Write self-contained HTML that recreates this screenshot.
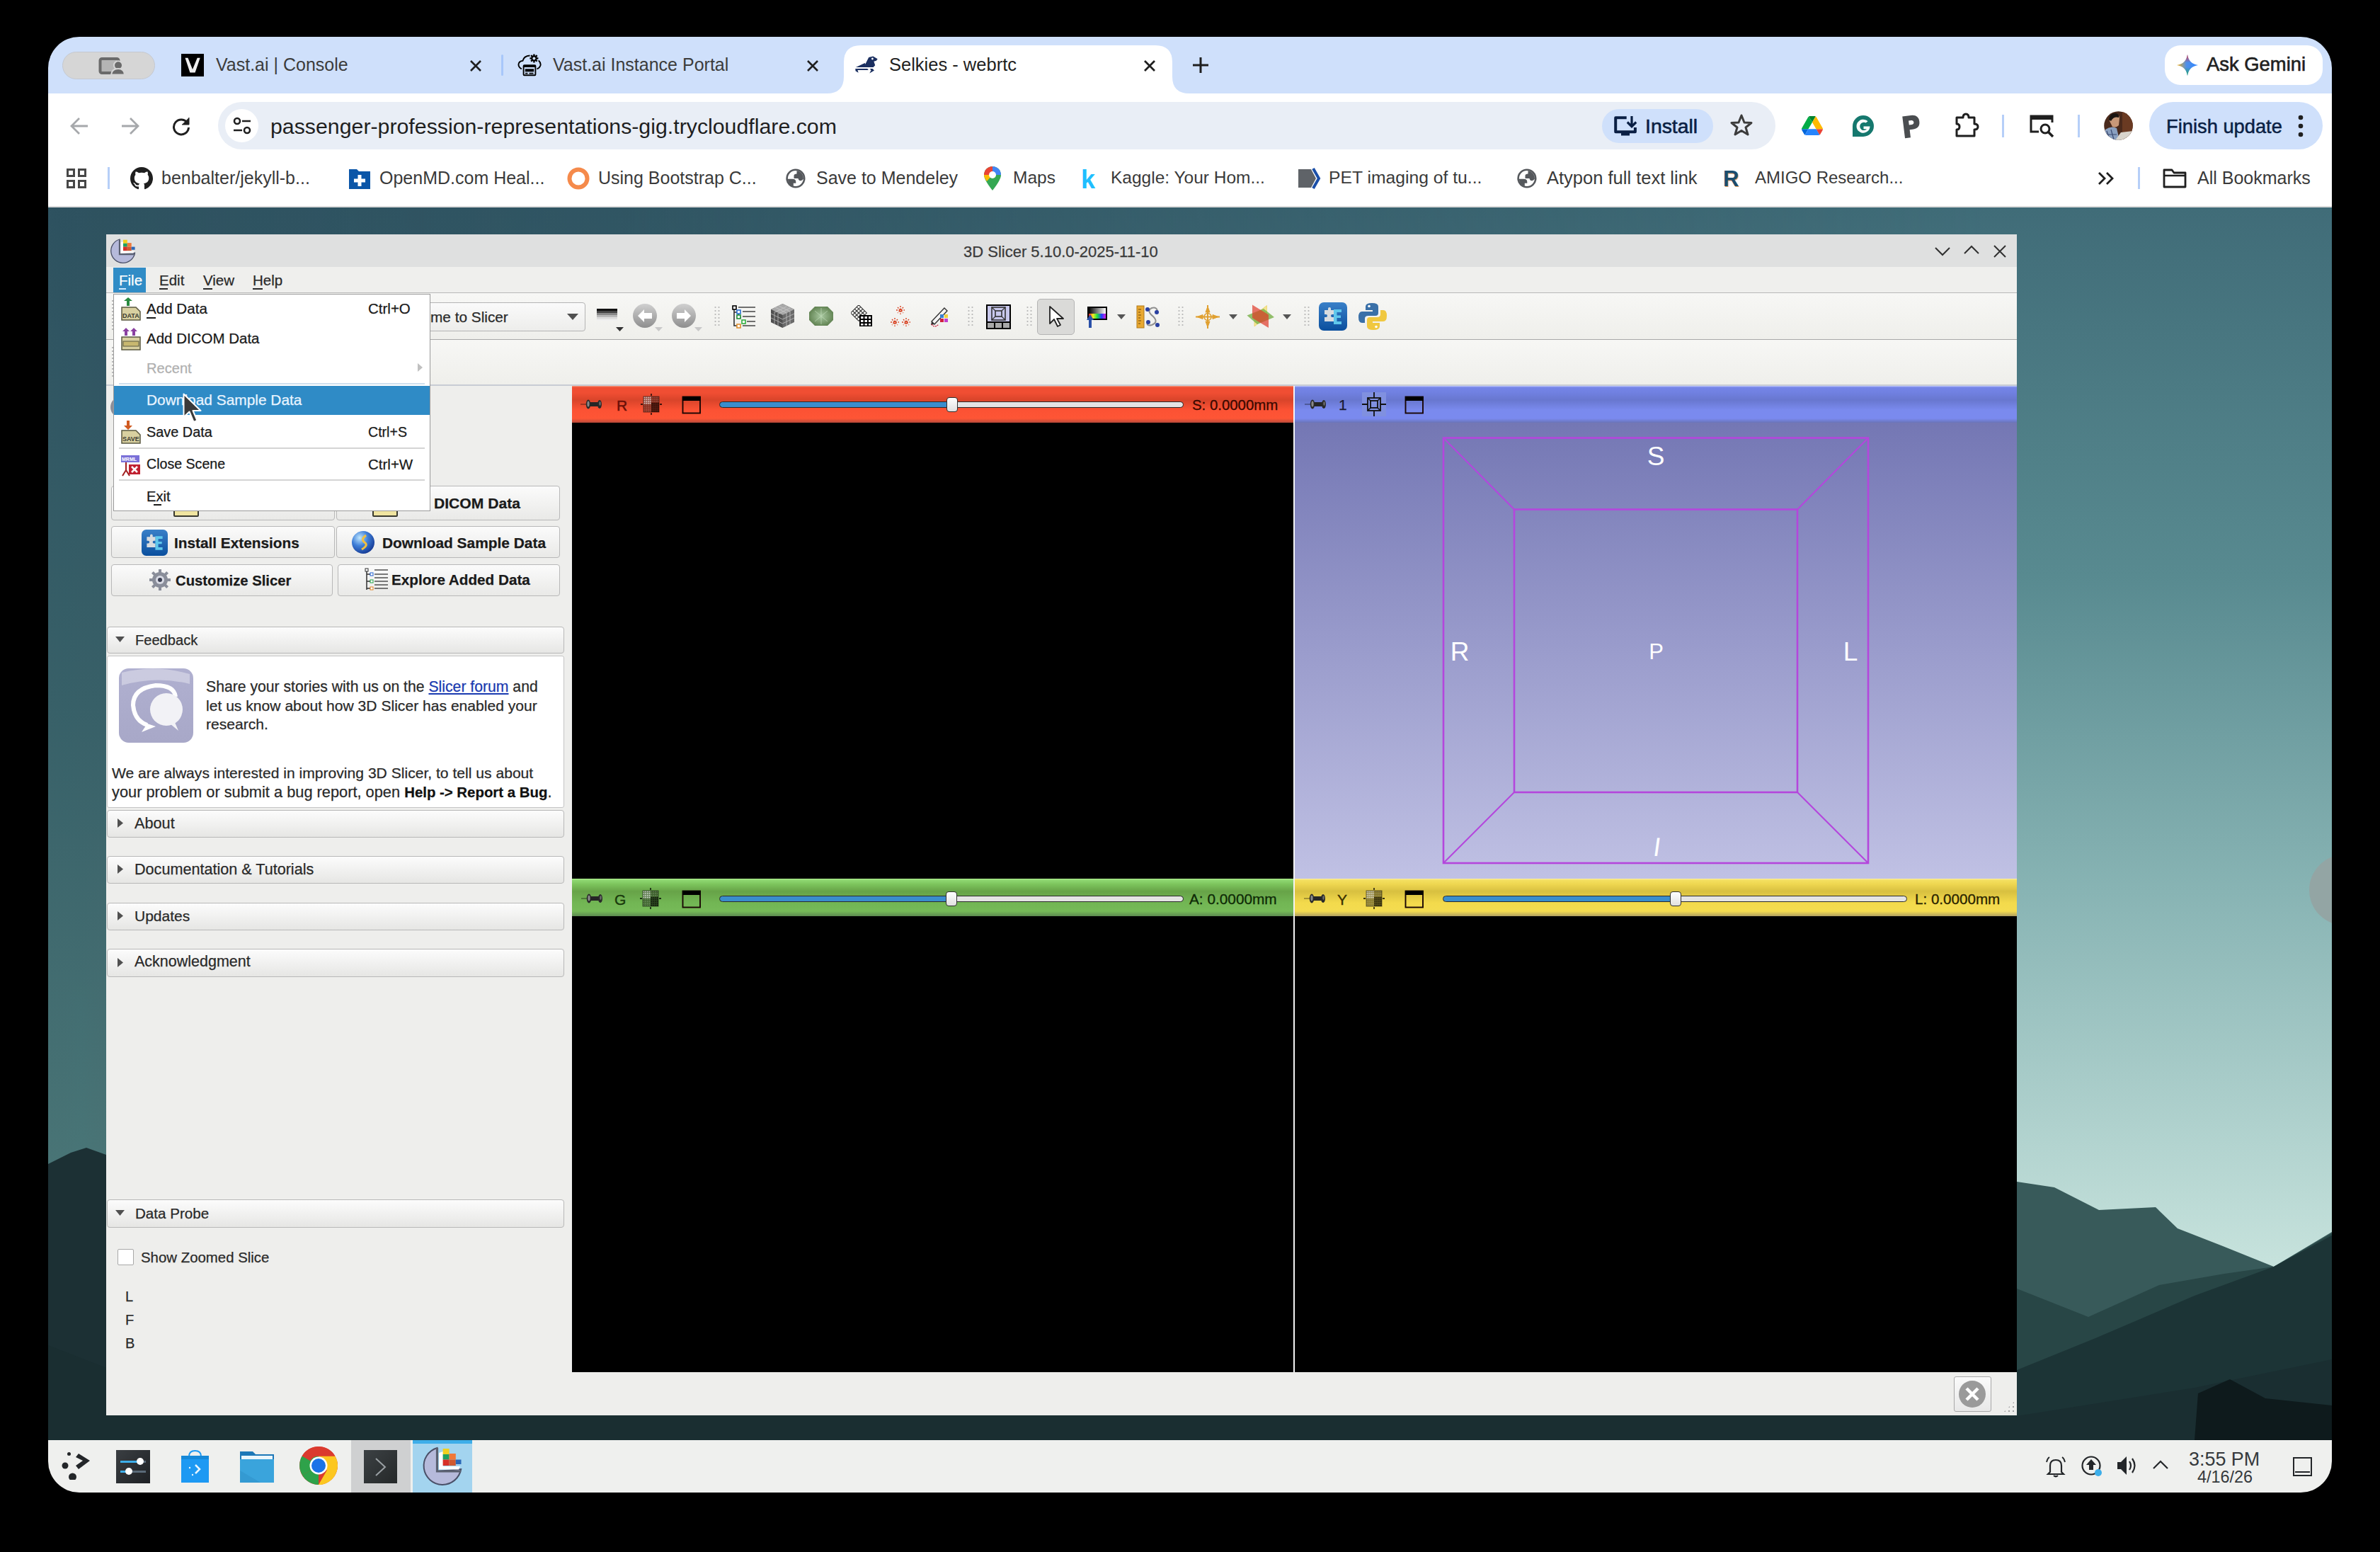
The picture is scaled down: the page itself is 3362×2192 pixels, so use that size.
<!DOCTYPE html>
<html><head><meta charset="utf-8">
<style>
*{box-sizing:border-box;margin:0;padding:0}
html,body{width:3362px;height:2192px;overflow:hidden;background:#000;font-family:"Liberation Sans",sans-serif}
.a{position:absolute}
#win{position:absolute;left:0;top:0;width:3362px;height:2192px;clip-path:inset(52px 68px 84px 68px round 44px)}
.t{position:absolute;white-space:pre;line-height:1}
.sl .t{-webkit-text-stroke:0.25px currentColor}
</style></head><body>
<div id="win">
<!-- ===== CHROME TAB STRIP ===== -->
<div class="a" style="left:68px;top:52px;width:3226px;height:80px;background:#cfe0fb"></div>
<!-- profile pill -->
<div class="a" style="left:88px;top:73px;width:131px;height:39px;border-radius:20px;background:#d6d6d6;border:1px solid #c4c8d0"></div>
<svg class="a" style="left:138px;top:80px" width="40" height="26" viewBox="0 0 40 26"><rect x="3.5" y="3" width="26" height="20" rx="2.5" fill="#b4b4b4" stroke="#6a6a6a" stroke-width="4"/><circle cx="29" cy="12.3" r="6" fill="#6a6a6a" stroke="#d6d6d6" stroke-width="2"/><path d="M19 25.5 Q20 17 29 17 Q37.5 17 38 25.5Z" fill="#6a6a6a" stroke="#d6d6d6" stroke-width="2"/></svg>
<!-- tab 1 -->
<div class="a" style="left:256px;top:76px;width:32px;height:32px;background:#000"></div>
<svg class="a" style="left:256px;top:76px" width="32" height="32" viewBox="0 0 32 32"><path d="M5.5 5.7H9.5L16 22L22.7 5.7H26.7L19.6 26.4H12.4Z" fill="#eeeeee"/></svg>
<div class="t" style="left:305px;top:79px;font-size:25px;color:#3c3c3c">Vast.ai | Console</div>
<svg class="a" style="left:663px;top:84px" width="18" height="18" viewBox="0 0 18 18"><path d="M2 2L16 16M16 2L2 16" stroke="#1f1f1f" stroke-width="2.6"/></svg>
<div class="a" style="left:708px;top:77px;width:3px;height:30px;background:#a8c7fa;border-radius:2px"></div>
<!-- tab 2 -->
<svg class="a" style="left:730px;top:75px" width="36" height="34" viewBox="730 75 36 34"><g fill="none" stroke="#000" stroke-width="1.9" stroke-linecap="butt"><path d="M736.8 97.4 Q731 94 733 89 Q734.5 86 738.4 85.9 Q740 79 748.5 78.5"/><path d="M760.7 85.4 Q764.5 89 763.4 92.5 Q762 96.5 758.4 97.4"/><rect x="739.6" y="92.2" width="16.8" height="14" rx="1"/><path d="M742 103.6H745.5M747.5 103.6H753.5"/></g><rect x="739.6" y="92" width="16.8" height="3" fill="#000"/><rect x="741.8" y="97.3" width="12.4" height="4" fill="#000"/><g transform="translate(754.4 82.4)"><circle r="4.2" fill="#000"/><path d="M-1.2 -6H1.2V6H-1.2Z M-6 -1.2H6V1.2H-6Z" fill="#000" transform="rotate(0)"/><path d="M-1.2 -6H1.2V6H-1.2Z M-6 -1.2H6V1.2H-6Z" fill="#000" transform="rotate(45)"/><circle r="2" fill="#cfe0fb"/></g></svg>
<div class="t" style="left:781px;top:79px;font-size:25px;color:#3c3c3c">Vast.ai Instance Portal</div>
<svg class="a" style="left:1139px;top:84px" width="18" height="18" viewBox="0 0 18 18"><path d="M2 2L16 16M16 2L2 16" stroke="#1f1f1f" stroke-width="2.6"/></svg>
<!-- active tab -->
<svg class="a" style="left:1168px;top:64px" width="512" height="68" viewBox="0 0 512 68"><path d="M0 68 Q24 68 24 44 L24 24 Q24 0 48 0 L464 0 Q488 0 488 24 L488 44 Q488 68 512 68Z" fill="#fff"/></svg>
<svg class="a" style="left:1205px;top:76px" width="38" height="30" viewBox="1205 76 38 30"><path fill="#1b2f60" d="M1208.9 94.9L1221.7 89.1L1222.3 90.7L1227.2 81L1233.3 79.6L1239.7 83.3L1237.9 85.7L1234.4 86.8L1236.2 92.3L1233.6 94.9Z"/><circle cx="1232.4" cy="83" r="1.4" fill="#fff"/><path fill="#1b2f60" d="M1208.3 96.9H1225.3L1226.8 98.9H1211.5L1212.6 102.8L1208.5 100.2Z"/><path fill="#1b2f60" d="M1228.9 96.9H1232.5L1235 99.6L1228.3 103.4L1230.5 99.2Z"/></svg>
<div class="t" style="left:1256px;top:79px;font-size:25.5px;color:#1f1f1f">Selkies - webrtc</div>
<svg class="a" style="left:1615px;top:84px" width="18" height="18" viewBox="0 0 18 18"><path d="M2 2L16 16M16 2L2 16" stroke="#1f1f1f" stroke-width="2.8"/></svg>
<svg class="a" style="left:1685px;top:81px" width="22" height="22" viewBox="0 0 22 22"><path d="M11 0V22M0 11H22" stroke="#1f1f1f" stroke-width="3"/></svg>
<!-- ask gemini -->
<div class="a" style="left:3058px;top:64px;width:223px;height:56px;border-radius:22px;background:#fff"></div>
<svg class="a" style="left:3075px;top:77px" width="30" height="30" viewBox="0 0 32 32"><defs><linearGradient id="gmh" x1="0" y1="0" x2="1" y2="0"><stop offset="0" stop-color="#f6ad12"/><stop offset=".45" stop-color="#4f8fe8"/><stop offset="1" stop-color="#3186ff"/></linearGradient><linearGradient id="gmv" x1="0" y1="0" x2="0" y2="1"><stop offset="0" stop-color="#e8383d"/><stop offset=".38" stop-color="#e8383d" stop-opacity="0"/><stop offset=".6" stop-color="#1ea55a" stop-opacity="0"/><stop offset="1" stop-color="#1ea55a"/></linearGradient></defs><path d="M16 0 Q18 14 32 16 Q18 18 16 32 Q14 18 0 16 Q14 14 16 0Z" fill="url(#gmh)"/><path d="M16 0 Q18 14 32 16 Q18 18 16 32 Q14 18 0 16 Q14 14 16 0Z" fill="url(#gmv)"/></svg>
<div class="t" style="left:3117px;top:77px;font-size:27.4px;color:#1f1f1f;-webkit-text-stroke:0.6px #1f1f1f">Ask Gemini</div>

<!-- ===== TOOLBAR ===== -->
<div class="a" style="left:68px;top:132px;width:3226px;height:160px;background:#fff"></div>
<svg class="a" style="left:98px;top:164px" width="28" height="28" viewBox="0 0 28 28"><path d="M26 14H4M14 3L3 14L14 25" fill="none" stroke="#a6a8ab" stroke-width="2.8"/></svg>
<svg class="a" style="left:170px;top:164px" width="28" height="28" viewBox="0 0 28 28"><path d="M2 14H24M14 3L25 14L14 25" fill="none" stroke="#a6a8ab" stroke-width="2.8"/></svg>
<svg class="a" style="left:242px;top:164px" width="28" height="28" viewBox="0 0 28 28"><path d="M23 10 A10.5 10.5 0 1 0 24.5 16" fill="none" stroke="#1f1f1f" stroke-width="3"/><path d="M25 2V12H15" fill="#1f1f1f" stroke="#1f1f1f" stroke-width="1"/></svg>
<!-- omnibox -->
<div class="a" style="left:308px;top:144px;width:2200px;height:67px;border-radius:34px;background:#e9eef6"></div>
<div class="a" style="left:318px;top:154px;width:47px;height:47px;border-radius:50%;background:#fff"></div>
<svg class="a" style="left:328px;top:164px" width="28" height="28" viewBox="0 0 28 28"><circle cx="7" cy="7" r="4" fill="none" stroke="#1f1f1f" stroke-width="2.6"/><path d="M14 7H26M2 20H14" stroke="#1f1f1f" stroke-width="2.6"/><circle cx="21" cy="20" r="4" fill="none" stroke="#1f1f1f" stroke-width="2.6"/></svg>
<div class="t" style="left:382px;top:164px;font-size:30.3px;color:#1f1f1f">passenger-profession-representations-gig.trycloudflare.com</div>
<div class="a" style="left:2263px;top:154px;width:157px;height:48px;border-radius:24px;background:#cfe0fb"></div>
<svg class="a" style="left:2276px;top:160px" width="40" height="36" viewBox="2276 160 40 36"><path d="M2297.7 166.2H2282.2V186.2H2309.9V180" fill="none" stroke="#0a1f44" stroke-width="4" stroke-linejoin="round"/><rect x="2290" y="187" width="12" height="4.5" fill="#0a1f44"/><path d="M2305 164V178.5M2298.8 172.5L2305 178.7L2311.2 172.5" fill="none" stroke="#0a1f44" stroke-width="3.2"/></svg>
<div class="t" style="left:2324px;top:164px;font-size:28.4px;color:#0a1f44;-webkit-text-stroke:0.6px #0a1f44">Install</div>
<svg class="a" style="left:2444px;top:161px" width="32" height="32" viewBox="0 0 32 32"><path d="M16 2L20 12L30 12.5L22 19L25 29L16 23.5L7 29L10 19L2 12.5L12 12Z" fill="none" stroke="#3c3c3c" stroke-width="3" stroke-linejoin="round"/></svg>
<!-- extension icons -->
<svg class="a" style="left:2545px;top:164px" width="30" height="27" viewBox="0 0 87.3 78" preserveAspectRatio="none"><path d="m6.6 66.85 3.85 6.65c.8 1.4 1.95 2.5 3.3 3.3l13.75-23.8h-27.5c0 1.55.4 3.1 1.2 4.5z" fill="#0066da"/><path d="m43.65 25-13.75-23.8c-1.35.8-2.5 1.9-3.3 3.3l-25.4 44a9.06 9.06 0 0 0 -1.2 4.5h27.5z" fill="#00ac47"/><path d="m73.55 76.8c1.35-.8 2.5-1.9 3.3-3.3l1.6-2.75 7.65-13.25c.8-1.4 1.2-2.95 1.2-4.5h-27.502l5.852 11.5z" fill="#ea4335"/><path d="m43.65 25 13.75-23.8c-1.35-.8-2.9-1.2-4.5-1.2h-18.5c-1.6 0-3.15.45-4.5 1.2z" fill="#00832d"/><path d="m59.8 53h-32.3l-13.75 23.8c1.35.8 2.9 1.2 4.5 1.2h50.8c1.6 0 3.15-.45 4.5-1.2z" fill="#2684fc"/><path d="m73.4 26.5-12.7-22c-.8-1.4-1.95-2.5-3.3-3.3l-13.75 23.8 16.15 28h27.45c0-1.55-.4-3.1-1.2-4.5z" fill="#ffba00"/></svg>
<svg class="a" style="left:2617px;top:163px" width="30" height="30" viewBox="0 0 30 30"><path d="M15 0A15 15 0 1 1 15 30H0V15A15 15 0 0 1 15 0Z" fill="#15786e"/><path d="M21.5 8.3A9.5 9.5 0 1 0 24.5 15.5H15.5V19.2H20A5.6 5.6 0 1 1 18.6 10.6Z" fill="#fff"/></svg>
<svg class="a" style="left:2684px;top:159px" width="32" height="38" viewBox="0 0 32 38"><g transform="rotate(-7 16 19)"><path d="M5 4H17 Q28 4 28 14 Q28 24 17 24H13V35H5Z" fill="#4a4d50"/><path d="M13 11H17 Q20 11 20 14 Q20 17 17 17H13Z" fill="#fff"/></g></svg>
<svg class="a" style="left:2760px;top:158px" width="36" height="38" viewBox="0 0 36 38"><path d="M4 8H13 Q13 3 17 3 Q21 3 21 8H29V17 Q34 17 34 21 Q34 25 29 25V34H4V25 Q8 25 8 21 Q8 17 4 17Z" fill="none" stroke="#1f1f1f" stroke-width="3" stroke-linejoin="round"/></svg>
<div class="a" style="left:2828px;top:162px;width:3px;height:32px;background:#b6cff8"></div>
<svg class="a" style="left:2866px;top:160px" width="38" height="36" viewBox="0 0 38 36"><path d="M14 26H3V4H33V13" fill="none" stroke="#1f1f1f" stroke-width="3"/><rect x="3" y="3" width="30" height="6" fill="#1f1f1f"/><circle cx="23" cy="22" r="6" fill="none" stroke="#1f1f1f" stroke-width="3"/><path d="M27 26L34 33" stroke="#1f1f1f" stroke-width="3.5"/></svg>
<div class="a" style="left:2935px;top:162px;width:3px;height:32px;background:#b6cff8"></div>
<svg class="a" style="left:2972px;top:157px" width="41" height="41" viewBox="0 0 41 41"><defs><clipPath id="avc"><circle cx="20.5" cy="20.5" r="20.3"/></clipPath></defs><g clip-path="url(#avc)"><rect width="41" height="41" fill="#4a2a1c"/><rect x="26" y="0" width="15" height="41" fill="#6a3a22"/><path d="M8 14 Q8 4 16 4 Q22 4 22 10 L21 20 Q17 24 12 22Z" fill="#c89878"/><path d="M7 12 Q8 2 17 3 Q22 4 21 9 Q14 7 10 14Z" fill="#1a1410"/><path d="M0 41 L2 26 Q10 20 18 24 L22 41Z" fill="#8aa0c0"/><path d="M4 28L8 40M10 26L14 40M2 33H18" stroke="#3a4a70" stroke-width="1.2"/><path d="M16 41 L24 30 L41 28 V41Z" fill="#d8d4cc"/></g></svg>
<div class="a" style="left:3036px;top:144px;width:245px;height:67px;border-radius:34px;background:#cfe0fb"></div>
<div class="t" style="left:3060px;top:165px;font-size:27.3px;color:#0a1f44;-webkit-text-stroke:0.5px #0a1f44">Finish update</div>
<svg class="a" style="left:3243px;top:162px" width="14" height="32" viewBox="0 0 14 32"><circle cx="7" cy="4" r="3.3" fill="#1f1f1f"/><circle cx="7" cy="16" r="3.3" fill="#1f1f1f"/><circle cx="7" cy="28" r="3.3" fill="#1f1f1f"/></svg>

<!-- ===== BOOKMARKS ===== -->
<svg class="a" style="left:94px;top:238px" width="28" height="28" viewBox="0 0 28 28"><g fill="none" stroke="#474747" stroke-width="3"><rect x="1.5" y="1.5" width="9" height="9"/><rect x="17.5" y="1.5" width="9" height="9"/><rect x="1.5" y="17.5" width="9" height="9"/><rect x="17.5" y="17.5" width="9" height="9"/></g></svg>
<div class="a" style="left:152px;top:236px;width:3px;height:31px;background:#b6cff8"></div>
<svg class="a" style="left:184px;top:236px" width="32" height="32" viewBox="0 0 16 16"><path fill="#1f1f1f" d="M8 0C3.58 0 0 3.58 0 8c0 3.54 2.29 6.53 5.47 7.59.4.07.55-.17.55-.38 0-.19-.01-.82-.01-1.49-2.01.37-2.53-.49-2.69-.94-.09-.23-.48-.94-.82-1.13-.28-.15-.68-.52-.01-.53.63-.01 1.08.58 1.23.82.72 1.21 1.87.87 2.33.66.07-.52.28-.87.51-1.07-1.78-.2-3.64-.89-3.64-3.95 0-.87.31-1.59.82-2.15-.08-.2-.36-1.02.08-2.12 0 0 .67-.21 2.2.82.64-.18 1.32-.27 2-.27.68 0 1.36.09 2 .27 1.53-1.04 2.2-.82 2.2-.82.44 1.1.16 1.92.08 2.12.51.56.82 1.27.82 2.15 0 3.07-1.87 3.75-3.65 3.95.29.25.54.73.54 1.48 0 1.07-.01 1.93-.01 2.2 0 .21.15.46.55.38A8.013 8.013 0 0016 8c0-4.42-3.58-8-8-8z"/></svg>
<div class="t" style="left:228px;top:239px;font-size:25px;color:#3a3a3a">benbalter/jekyll-b...</div>
<svg class="a" style="left:492px;top:236px" width="32" height="32" viewBox="0 0 32 32"><path d="M1 3H12L15 6H31V31H1Z" fill="#0b56a8"/><path d="M16 11V27M8 19H24" stroke="#fff" stroke-width="5"/></svg>
<div class="t" style="left:536px;top:239px;font-size:25px;color:#3a3a3a">OpenMD.com Heal...</div>
<svg class="a" style="left:801px;top:236px" width="32" height="32" viewBox="0 0 32 32"><circle cx="16" cy="16" r="12.5" fill="none" stroke="#f58a4b" stroke-width="6"/></svg>
<div class="t" style="left:845px;top:239px;font-size:25px;color:#3a3a3a">Using Bootstrap C...</div>
<svg class="a" style="left:1107px;top:236px" width="32" height="32" viewBox="0 0 32 32"><circle cx="16.9" cy="16" r="13.6" fill="#55585c"/><circle cx="16.9" cy="16" r="11" fill="#fff"/><path d="M18.5 5 A11 11 0 0 1 27.9 16.8 Q26 19.5 23.5 19.2 Q21 19 20.5 16 H14.5 V12 Q14.5 9.5 18.5 9.5Z" fill="#55585c"/><path d="M5.9 16.8 H12.5 Q17.3 16.8 17.3 21 V22.7 H13.8 V27 A11 11 0 0 1 5.9 16.8Z" fill="#55585c"/></svg>
<div class="t" style="left:1153px;top:239px;font-size:25px;color:#3a3a3a">Save to Mendeley</div>
<svg class="a" style="left:1388px;top:234px" width="28" height="36" viewBox="0 0 28 36"><path d="M14 35 Q2 20 2 13 A12 12 0 0 1 26 13 Q26 20 14 35Z" fill="#34a853"/><path d="M2 13 A12 12 0 0 1 14 1 L14 13Z" fill="#ea4335"/><path d="M14 1 A12 12 0 0 1 26 13 L14 13Z" fill="#4285f4"/><path d="M2 13 Q2 17 6 22 L14 13Z" fill="#fbbc04"/><circle cx="14" cy="13" r="5" fill="#fff"/></svg>
<div class="t" style="left:1431px;top:239px;font-size:24.5px;color:#3a3a3a">Maps</div>
<div class="t" style="left:1527px;top:236px;font-size:36px;color:#20beff;font-weight:700">k</div>
<div class="t" style="left:1569px;top:239px;font-size:24.5px;color:#3a3a3a">Kaggle: Your Hom...</div>
<svg class="a" style="left:1832px;top:237px" width="34" height="30" viewBox="0 0 34 30"><path d="M2 2H20L27 15L20 28H2Z" fill="#5f6368"/><path d="M23 1L31 15L23 29" fill="none" stroke="#1b4fa8" stroke-width="4"/></svg>
<div class="t" style="left:1877px;top:239px;font-size:24.7px;color:#3a3a3a">PET imaging of tu...</div>
<svg class="a" style="left:2140px;top:236px" width="32" height="32" viewBox="0 0 32 32"><circle cx="16.9" cy="16" r="13.6" fill="#55585c"/><circle cx="16.9" cy="16" r="11" fill="#fff"/><path d="M18.5 5 A11 11 0 0 1 27.9 16.8 Q26 19.5 23.5 19.2 Q21 19 20.5 16 H14.5 V12 Q14.5 9.5 18.5 9.5Z" fill="#55585c"/><path d="M5.9 16.8 H12.5 Q17.3 16.8 17.3 21 V22.7 H13.8 V27 A11 11 0 0 1 5.9 16.8Z" fill="#55585c"/></svg>
<div class="t" style="left:2185px;top:239px;font-size:25.5px;color:#3a3a3a">Atypon full text link</div>
<div class="t" style="left:2434px;top:237px;font-size:31px;color:#1b4d6e;font-weight:700;text-shadow:1px 1px 0 #e8a060">R</div>
<div class="t" style="left:2479px;top:239px;font-size:24px;color:#3a3a3a">AMIGO Research...</div>
<svg class="a" style="left:2963px;top:242px" width="24" height="20" viewBox="0 0 24 20"><path d="M2 2L10 10L2 18M13 2L21 10L13 18" fill="none" stroke="#1f1f1f" stroke-width="2.8"/></svg>
<div class="a" style="left:3020px;top:236px;width:3px;height:31px;background:#b6cff8"></div>
<svg class="a" style="left:3055px;top:238px" width="34" height="28" viewBox="0 0 34 28"><path d="M2 2H13L16 6H32V26H2Z" fill="none" stroke="#1f1f1f" stroke-width="2.8" stroke-linejoin="round"/><path d="M2 10H32" stroke="#1f1f1f" stroke-width="2.5"/></svg>
<div class="t" style="left:3104px;top:239px;font-size:25px;color:#3a3a3a">All Bookmarks</div>
<div class="a" style="left:68px;top:291px;width:3226px;height:2px;background:#dcdcdc"></div>
<!-- ===== DESKTOP WALLPAPER ===== -->
<svg class="a" style="left:68px;top:293px" width="3226" height="1741" viewBox="68 293 3226 1741">
<defs>
<linearGradient id="skyL" x1="0" y1="293" x2="0" y2="1700" gradientUnits="userSpaceOnUse"><stop offset="0" stop-color="#2e5260"/><stop offset=".5" stop-color="#386068"/><stop offset="1" stop-color="#4a7677"/></linearGradient>
<linearGradient id="skyR" x1="0" y1="293" x2="0" y2="1780" gradientUnits="userSpaceOnUse"><stop offset="0" stop-color="#406c78"/><stop offset=".35" stop-color="#588a90"/><stop offset=".65" stop-color="#88b4b4"/><stop offset="1" stop-color="#c6e2dc"/></linearGradient>
<linearGradient id="hm" x1="68" y1="0" x2="3294" y2="0" gradientUnits="userSpaceOnUse"><stop offset="0" stop-color="#000"/><stop offset=".25" stop-color="#222"/><stop offset=".85" stop-color="#fff"/><stop offset="1" stop-color="#fff"/></linearGradient>
<mask id="hmask"><rect x="68" y="293" width="3226" height="1741" fill="url(#hm)"/></mask>
</defs>
<rect x="68" y="293" width="3226" height="1741" fill="url(#skyL)"/>
<rect x="68" y="293" width="3226" height="1741" fill="url(#skyR)" mask="url(#hmask)"/>
<circle cx="3312" cy="1257" r="50" fill="#93a5a4"/>
<path d="M2600 1700L2849 1669L2902 1677L2965 1709L3045 1705L3076 1735L3140 1760L3212 1789L3294 1740V2034H2600Z" fill="#385a5a"/>
<path d="M2600 1820L2849 1820L2950 1860L3050 1815L3142 1799L3212 1789L3294 1742V2034H2600Z" fill="#284646"/>
<path d="M2600 1960L2849 1935L2960 1890L3100 1830L3212 1789L3294 1745V2034H2600Z" fill="#1c3436"/>
<path d="M68 1644L100 1628L122 1621L150 1631L400 1760V2034H68Z" fill="#1c3034"/>
<path d="M68 1900L300 1990L2849 2000L3100 1960L3294 1920V2034H68Z" fill="#1a2e31"/>
<path d="M3105 1968L3150 1948L3200 1975L3294 1985V2034H3100Z" fill="#0e1a1c"/>
</svg>
<!-- ===== TASKBAR ===== -->
<div class="a" style="left:68px;top:2034px;width:3226px;height:74px;background:#eff0ee"></div>
<svg class="a" style="left:86px;top:2050px" width="44" height="40" viewBox="0 0 44 40"><circle cx="11.5" cy="3.5" r="2.5" fill="#232629"/><circle cx="6" cy="20" r="4.5" fill="#232629"/><circle cx="16.5" cy="36" r="5.5" fill="#232629"/><path d="M25 3L41 13L25 25L21 20L31 13L21 8Z" fill="#232629"/></svg>
<div class="a" style="left:164px;top:2048px;width:48px;height:47px;background:linear-gradient(135deg,#3a3e42,#1e2124)"></div>
<div class="a" style="left:170px;top:2063px;width:36px;height:3px;background:#5a6a78"></div><div class="a" style="left:170px;top:2063px;width:28px;height:3px;background:#3daee9"></div><div class="a" style="left:193px;top:2059px;width:10px;height:10px;border-radius:50%;background:#fff"></div>
<div class="a" style="left:170px;top:2077px;width:36px;height:3px;background:#5a6a78"></div><div class="a" style="left:170px;top:2077px;width:12px;height:3px;background:#3daee9"></div><div class="a" style="left:177px;top:2073px;width:10px;height:10px;border-radius:50%;background:#fff"></div>
<svg class="a" style="left:255px;top:2047px" width="41" height="48" viewBox="0 0 41 48"><path d="M12 10 Q12 2 20.5 2 Q29 2 29 10" fill="none" stroke="#1d99f3" stroke-width="2"/><path d="M1 9H40V47H1Z" fill="#1d99f3"/><path d="M1 9H40V14H1Z" fill="#1689d8"/><path d="M21 22L27 28L21 34" fill="none" stroke="#e8f6ff" stroke-width="2.5"/><circle cx="13" cy="26" r="1.2" fill="#e8f6ff"/><circle cx="17" cy="36" r="1.2" fill="#e8f6ff"/></svg>
<svg class="a" style="left:338px;top:2047px" width="50" height="48" viewBox="0 0 50 48"><path d="M1 3H19L23 7H49V47H1Z" fill="#1d78b8"/><path d="M3 9H47V18H3Z" fill="#eaf6fc"/><path d="M1 14H49V47H1Z" fill="#3aa4dc"/><path d="M1 30L30 47H1Z" fill="#2e90c8" opacity=".5"/></svg>
<svg class="a" style="left:423px;top:2043px" width="54" height="54" viewBox="0 0 54 54"><circle cx="27" cy="27" r="27" fill="#db3a2e"/><path d="M27 27L4 40.5A27 27 0 0 0 27 54Z" fill="#2ea24a"/><path d="M27 27L4 40.5A27 27 0 0 1 3.6 13.5L27 13.5Z" fill="#2ea24a"/><path d="M27 13.5H50.4A27 27 0 0 1 27 54L38.7 33.75Z" fill="#fcc720"/><path d="M3.6 13.5A27 27 0 0 1 50.4 13.5H27A13.5 13.5 0 0 0 15.3 20.25Z" fill="#db3a2e"/><circle cx="27" cy="27" r="12.5" fill="#fff"/><circle cx="27" cy="27" r="10" fill="#1a73e8"/></svg>
<div class="a" style="left:496px;top:2034px;width:84px;height:74px;background:#cfd0d1"></div>
<div class="a" style="left:514px;top:2048px;width:47px;height:47px;background:linear-gradient(135deg,#3c4144,#252829)"></div>
<svg class="a" style="left:528px;top:2058px" width="20" height="28" viewBox="0 0 20 28"><path d="M3 2L16 14L3 26" fill="none" stroke="#9aa0a4" stroke-width="2"/></svg>
<div class="a" style="left:583px;top:2034px;width:84px;height:74px;background:#a3d4ef"></div>
<div class="a" style="left:583px;top:2034px;width:84px;height:5px;background:#3daee9"></div>
<svg class="a" style="left:590px;top:2038px" width="70" height="68" viewBox="590 2038 70 68">
<path d="M617.5 2045.0 A26.5 26.5 0 1 0 651.2 2075.0 L617.5 2078.0Z" fill="#b6badb" stroke="#4a5068" stroke-width="2.0"/>
<path d="M617.5 2045.0 V2078.0 H651.2" fill="none" stroke="#5a6070" stroke-width="3.2"/>
<path d="M620.0 2052.0 L626.0 2050.0 V2071.0 H650.0 L648.0 2075.5 H620.0Z" fill="#fff"/>
<rect x="625.6" y="2046.0" width="9.0" height="8.0" fill="#f0d020"/>
<rect x="625.6" y="2054.0" width="9.0" height="7.5" fill="#20a060"/>
<rect x="634.6" y="2053.0" width="9.2" height="8.5" fill="#f07838"/>
<rect x="625.6" y="2061.5" width="9.0" height="8.5" fill="#d83028"/>
<rect x="634.6" y="2061.5" width="9.2" height="8.5" fill="#d05a30"/>
<rect x="643.8" y="2061.5" width="7.7" height="6.5" fill="#2a68b8"/>
</svg>
<!-- tray -->
<svg class="a" style="left:2888px;top:2055px" width="32" height="32" viewBox="0 0 32 32"><path d="M8 24V15 Q8 7 16 7 Q24 7 24 15V24L27 27H5Z" fill="none" stroke="#232629" stroke-width="2.2"/><path d="M13 29 Q16 32 19 29" fill="#232629" stroke="#232629" stroke-width="2"/><path d="M3 10 Q4 5 7 3M29 10 Q28 5 25 3" fill="none" stroke="#232629" stroke-width="1.8"/></svg>
<svg class="a" style="left:2939px;top:2055px" width="32" height="34" viewBox="0 0 32 34"><circle cx="15" cy="15" r="12.5" fill="none" stroke="#232629" stroke-width="2.2"/><path d="M15 6L22 14H18V21H12V14H8Z" fill="#232629"/><circle cx="25" cy="25" r="5" fill="#3daee9"/></svg>
<svg class="a" style="left:2990px;top:2054px" width="30" height="32" viewBox="0 0 30 32"><path d="M1 11H6L14 3V29L6 21H1Z" fill="#232629"/><path d="M18 10 Q22 16 18 22M22 6 Q29 16 22 26" fill="none" stroke="#232629" stroke-width="2.2"/></svg>
<svg class="a" style="left:3040px;top:2062px" width="24" height="14" viewBox="0 0 24 14"><path d="M2 12L12 2L22 12" fill="none" stroke="#232629" stroke-width="2.2"/></svg>
<div class="t" style="left:3092px;top:2047.5px;font-size:26.9px;color:#35393c">3:55 PM</div>
<div class="t" style="left:3104px;top:2075px;font-size:23.4px;color:#35393c">4/16/26</div>
<div class="a" style="left:3239px;top:2058px;width:27px;height:27px;border:2px solid #232629"></div>
<div class="a" style="left:3242px;top:2078px;width:21px;height:2px;background:#232629"></div>
<div class="sl"><!-- ===== SLICER WINDOW ===== -->
<div class="a" style="left:150px;top:331px;width:2699px;height:1668px;background:#eeeeec"></div>
<!-- title bar -->
<div class="a" style="left:150px;top:331px;width:2699px;height:46px;background:#dfe0e0"></div>
<svg class="a" style="left:152px;top:334px" width="44" height="42" viewBox="152 334 44 42">
<path d="M168.9 338.0 A17.0 17.0 0 1 0 190.5 357.3 L168.9 359.2Z" fill="#b6badb" stroke="#4a5068" stroke-width="1.3"/>
<path d="M168.9 338.0 V359.2 H190.5" fill="none" stroke="#5a6070" stroke-width="2.1"/>
<path d="M170.5 342.5 L174.3 341.2 V354.7 H189.7 L188.4 357.6 H170.5Z" fill="#fff"/>
<rect x="174.0" y="338.7" width="5.8" height="5.1" fill="#f0d020"/>
<rect x="174.0" y="343.8" width="5.8" height="4.8" fill="#20a060"/>
<rect x="179.8" y="343.1" width="5.9" height="5.5" fill="#f07838"/>
<rect x="174.0" y="348.6" width="5.8" height="5.5" fill="#d83028"/>
<rect x="179.8" y="348.6" width="5.9" height="5.5" fill="#d05a30"/>
<rect x="185.7" y="348.6" width="4.9" height="4.2" fill="#2a68b8"/>
</svg>
<div class="t" style="left:1361px;top:345px;font-size:22px;color:#3a3a3a">3D Slicer 5.10.0-2025-11-10</div>
<svg class="a" style="left:2733px;top:348px" width="22" height="14" viewBox="0 0 22 14"><path d="M1 2L11 12L21 2" fill="none" stroke="#303030" stroke-width="2"/></svg>
<svg class="a" style="left:2774px;top:346px" width="22" height="14" viewBox="0 0 22 14"><path d="M1 12L11 2L21 12" fill="none" stroke="#303030" stroke-width="2"/></svg>
<svg class="a" style="left:2816px;top:346px" width="18" height="18" viewBox="0 0 18 18"><path d="M1 1L17 17M17 1L1 17" stroke="#303030" stroke-width="2"/></svg>
<!-- menubar -->
<div class="a" style="left:150px;top:377px;width:2699px;height:37px;background:#efefed"></div>
<div class="a" style="left:160px;top:378px;width:46px;height:36px;background:#308cc6"></div>
<div class="t" style="left:168px;top:385.5px;font-size:20.5px;color:#fff">File</div>
<div class="a" style="left:168px;top:406.5px;width:10px;height:2px;background:#cfeaff"></div>
<div class="t" style="left:225px;top:385.5px;font-size:20.5px;color:#2a2a2a">Edit</div>
<div class="a" style="left:225px;top:407px;width:12px;height:2px;background:#2a2a2a"></div>
<div class="t" style="left:287px;top:385.5px;font-size:20.5px;color:#2a2a2a">View</div>
<div class="a" style="left:287px;top:407px;width:13px;height:2px;background:#2a2a2a"></div>
<div class="t" style="left:357px;top:385.5px;font-size:20.5px;color:#2a2a2a">Help</div>
<div class="a" style="left:357px;top:407px;width:14px;height:2px;background:#2a2a2a"></div>
<!-- toolbars -->
<div class="a" style="left:150px;top:413px;width:2699px;height:1px;background:#b8b8b8"></div>
<div class="a" style="left:150px;top:414px;width:2699px;height:65px;background:linear-gradient(#f7f7f5,#efefeb)"></div>
<div class="a" style="left:150px;top:479px;width:2699px;height:1px;background:#a8a8a8"></div>
<div class="a" style="left:150px;top:480px;width:2699px;height:63px;background:linear-gradient(#f7f7f5,#efefeb)"></div>
<div class="a" style="left:150px;top:543px;width:2699px;height:2px;background:#c8ccd4"></div>
<!-- views -->
<div class="a" style="left:808px;top:545px;width:2041px;height:1393px;background:#000"></div>
<div class="a" style="left:1827px;top:545px;width:2px;height:1393px;background:#f4f4f4"></div>
<div class="a" style="left:1829px;top:597px;width:1020px;height:644px;background:linear-gradient(#7477b4,#c0c1e4)"></div>
<!-- slice bars -->
<div class="a" style="left:808px;top:545px;width:1019px;height:52px;background:linear-gradient(#f5a488 0px,#f04e33 2px,#f04e33 10px,#d9442a 20px,#fc5234 34px,#fe5535 46px,#b84a3a 52px)"></div>
<div class="a" style="left:1829px;top:545px;width:1020px;height:52px;background:linear-gradient(#c8d0ff 0px,#7585e8 2px,#7080e0 10px,#6877cf 20px,#7a8aee 34px,#7a8aef 46px,#6a74b8 52px)"></div>
<div class="a" style="left:808px;top:1241px;width:1019px;height:53px;background:linear-gradient(#b0f090 0px,#8fd872 2px,#7cc45c 8px,#67a348 18px,#72b654 34px,#76ba58 46px,#5c8a50 53px)"></div>
<div class="a" style="left:1829px;top:1241px;width:1020px;height:53px;background:linear-gradient(#fff0a8 0px,#f4e060 2px,#eed650 8px,#d8c040 18px,#f3da4c 34px,#f4dc50 46px,#b0a060 53px)"></div>
<!-- status bar -->
<div class="a" style="left:150px;top:1938px;width:2699px;height:61px;background:#eeeeec"></div>
<!-- ===== SLICER TOOLBAR ICONS ===== -->
<div class="a" style="left:843px;top:436px;width:29px;height:17px;background:linear-gradient(#111 0,#111 3px,#444 3px,#444 6px,#888 6px,#888 9px,#b8b8b8 9px,#b8b8b8 12px,#dedede 12px,#dedede 15px,#f0f0f0 15px)"></div>
<svg class="a" style="left:870px;top:462px" width="11" height="6" viewBox="0 0 11 6"><path d="M0 0H11L5.5 6Z" fill="#333"/></svg>
<svg class="a" style="left:893px;top:428px" width="36" height="36" viewBox="0 0 36 36"><defs><linearGradient id="gbt" x1="0" y1="0" x2="0" y2="1"><stop offset="0" stop-color="#d0d0d0"/><stop offset="1" stop-color="#8e8e8e"/></linearGradient></defs><circle cx="18" cy="18" r="17" fill="url(#gbt)"/><path d="M8 18L17 9V14H28V22H17V27Z" fill="#fff"/></svg>
<svg class="a" style="left:948px;top:428px" width="36" height="36" viewBox="0 0 36 36"><circle cx="18" cy="18" r="17" fill="url(#gbt)"/><path d="M28 18L19 9V14H8V22H19V27Z" fill="#fff"/></svg>
<svg class="a" style="left:925px;top:462px" width="11" height="6" viewBox="0 0 11 6"><path d="M0 0H11L5.5 6Z" fill="#c8c8c8"/></svg>
<svg class="a" style="left:981px;top:462px" width="11" height="6" viewBox="0 0 11 6"><path d="M0 0H11L5.5 6Z" fill="#c8c8c8"/></svg>
<svg class="a" style="left:1009px;top:432px" width="8" height="30" viewBox="0 0 8 30"><g fill="#b4b4b4"><circle cx="1.5" cy="2" r="1.1"/><circle cx="1.5" cy="7" r="1.1"/><circle cx="1.5" cy="12" r="1.1"/><circle cx="1.5" cy="17" r="1.1"/><circle cx="1.5" cy="22" r="1.1"/><circle cx="1.5" cy="27" r="1.1"/><circle cx="6.5" cy="2" r="1.1"/><circle cx="6.5" cy="7" r="1.1"/><circle cx="6.5" cy="12" r="1.1"/><circle cx="6.5" cy="17" r="1.1"/><circle cx="6.5" cy="22" r="1.1"/><circle cx="6.5" cy="27" r="1.1"/></g></svg>
<svg class="a" style="left:1034px;top:431px" width="34" height="33" viewBox="0 0 34 33"><path d="M3 3V29H8M3 10H9M9 10V17H13" fill="none" stroke="#303030" stroke-width="1.6"/><rect x="1" y="1" width="5" height="5" fill="#fff" stroke="#000" stroke-width="1.6"/><rect x="7" y="7" width="5" height="5" fill="#fff" stroke="#2a70d0" stroke-width="1.6"/><rect x="7" y="14" width="5" height="5" fill="#fff" stroke="#20903a" stroke-width="1.6"/><rect x="14" y="21" width="5" height="5" fill="#fff" stroke="#30b040" stroke-width="1.6"/><rect x="7" y="27" width="5" height="5" fill="#fff" stroke="#e09030" stroke-width="1.6"/><path d="M9 3H33M15 9H33M15 16H33M21 23H33M15 29H33" stroke="#444" stroke-width="1.6"/></svg>
<svg class="a" style="left:1088px;top:428px" width="35" height="36" viewBox="0 0 35 36"><path d="M17.5 1L34 9V27L17.5 35L1 27V9Z" fill="#6a6a6a"/><path d="M17.5 1L34 9L17.5 17L1 9Z" fill="#a8a8a8"/><path d="M1 9L17.5 17V35L1 27Z" fill="#505050"/><path d="M7 6L23 14M12 4L28 12M1 15L17.5 23M1 21L17.5 29M6 12V30M11 14V33M23 14V32M28 12V30M17.5 23L34 15M17.5 29L34 21M23 5L7 13M28 7L12 15" stroke="#cfcfcf" stroke-width="1" opacity=".7"/></svg>
<svg class="a" style="left:1142px;top:432px" width="36" height="29" viewBox="0 0 36 29"><defs><radialGradient id="grn" cx=".5" cy=".5" r=".6"><stop offset="0" stop-color="#a8c8a0"/><stop offset="1" stop-color="#587a48"/></radialGradient></defs><path d="M9 1H27L35 9V20L27 28H9L1 20V9Z" fill="url(#grn)"/><path d="M9 7L27 22M27 7L9 22M18 3V26" stroke="#c8e0c0" stroke-width="1" opacity=".6"/></svg>
<svg class="a" style="left:1202px;top:431px" width="31" height="31" viewBox="0 0 31 31"><g transform="rotate(45 11 11)"><path d="M3 3H19V19H3Z M3 7H19M3 11H19M3 15H19M7 3V19M11 3V19M15 3V19" fill="none" stroke="#222" stroke-width="1"/></g><rect x="12" y="14" width="18" height="16" fill="#000"/><g fill="#fff"><rect x="14" y="16" width="3.5" height="3"/><rect x="19.5" y="16" width="3.5" height="3"/><rect x="25" y="16" width="3" height="3"/><rect x="14" y="21" width="3.5" height="3"/><rect x="19.5" y="21" width="3.5" height="3"/><rect x="25" y="21" width="3" height="3"/><rect x="14" y="26" width="3.5" height="2.5"/><rect x="19.5" y="26" width="3.5" height="2.5"/><rect x="25" y="26" width="3" height="2.5"/></g></svg>
<svg class="a" style="left:1256px;top:431px" width="32" height="32" viewBox="0 0 32 32"><g stroke="#d84020" stroke-width="1.4" stroke-dasharray="2 1.5"><path d="M16 1V13M10 7H22M12 3L20 11M20 3L12 11"/><path d="M8 18V30M2 24H14M4 20L12 28M12 20L4 28"/><path d="M24 18V30M18 24H30M20 20L28 28M28 20L20 28"/></g></svg>
<svg class="a" style="left:1314px;top:432px" width="28" height="30" viewBox="0 0 28 30"><path d="M2 22L20 3L24 7L6 26Z" fill="#f4f4f4" stroke="#333" stroke-width="1.4"/><path d="M2 22L1 27L6 26" fill="#333"/><path d="M2 26 Q6 32 12 26" fill="none" stroke="#d02040" stroke-width="1.2" stroke-dasharray="2 1"/><rect x="14" y="12" width="5" height="5" fill="#3a80d0"/><rect x="20" y="12" width="5" height="5" fill="#f0d040"/><rect x="14" y="18" width="5" height="5" fill="#d02040"/><rect x="20" y="18" width="5" height="5" fill="#c040d0"/></svg>
<svg class="a" style="left:1367px;top:432px" width="8" height="30" viewBox="0 0 8 30"><g fill="#b4b4b4"><circle cx="1.5" cy="2" r="1.1"/><circle cx="1.5" cy="7" r="1.1"/><circle cx="1.5" cy="12" r="1.1"/><circle cx="1.5" cy="17" r="1.1"/><circle cx="1.5" cy="22" r="1.1"/><circle cx="1.5" cy="27" r="1.1"/><circle cx="6.5" cy="2" r="1.1"/><circle cx="6.5" cy="7" r="1.1"/><circle cx="6.5" cy="12" r="1.1"/><circle cx="6.5" cy="17" r="1.1"/><circle cx="6.5" cy="22" r="1.1"/><circle cx="6.5" cy="27" r="1.1"/></g></svg>
<svg class="a" style="left:1392px;top:429px" width="37" height="37" viewBox="0 0 37 37"><rect x="1" y="1" width="35" height="35" fill="#000"/><rect x="3" y="3" width="31" height="22" fill="#c8c8ec"/><rect x="9" y="5" width="19" height="18" fill="none" stroke="#333" stroke-width="1.6"/><rect x="14" y="10" width="9" height="8" fill="none" stroke="#333" stroke-width="1.6"/><path d="M9 5L14 10M28 5L23 10M9 23L14 18M28 23L23 18" stroke="#333" stroke-width="1.2"/><rect x="3" y="27" width="9" height="7" fill="#a8a8a8"/><rect x="14" y="27" width="9" height="7" fill="#a8a8a8"/><rect x="25" y="27" width="9" height="7" fill="#a8a8a8"/></svg>
<svg class="a" style="left:1450px;top:432px" width="8" height="30" viewBox="0 0 8 30"><g fill="#b4b4b4"><circle cx="1.5" cy="2" r="1.1"/><circle cx="1.5" cy="7" r="1.1"/><circle cx="1.5" cy="12" r="1.1"/><circle cx="1.5" cy="17" r="1.1"/><circle cx="1.5" cy="22" r="1.1"/><circle cx="1.5" cy="27" r="1.1"/><circle cx="6.5" cy="2" r="1.1"/><circle cx="6.5" cy="7" r="1.1"/><circle cx="6.5" cy="12" r="1.1"/><circle cx="6.5" cy="17" r="1.1"/><circle cx="6.5" cy="22" r="1.1"/><circle cx="6.5" cy="27" r="1.1"/></g></svg>
<div class="a" style="left:1465px;top:422px;width:53px;height:51px;border:1px solid #b4b4b4;border-radius:5px;background:#dadad8"></div>
<svg class="a" style="left:1481px;top:431px" width="24" height="32" viewBox="0 0 24 32"><path d="M2 2V26L8 20L13 30L17 28L12 19H21Z" fill="#fff" stroke="#222" stroke-width="1.8" stroke-linejoin="round"/></svg>
<svg class="a" style="left:1533px;top:432px" width="32" height="32" viewBox="0 0 32 32"><defs><linearGradient id="bw" x1="0" x2="1"><stop offset="0" stop-color="#000"/><stop offset="1" stop-color="#fff"/></linearGradient><linearGradient id="rb" x1="0" x2="1"><stop offset="0" stop-color="#ff2020"/><stop offset=".25" stop-color="#f0f020"/><stop offset=".5" stop-color="#20e040"/><stop offset=".75" stop-color="#2040ff"/><stop offset="1" stop-color="#e020e0"/></linearGradient></defs><rect x="3" y="1" width="28" height="19" fill="#000"/><rect x="5" y="3" width="24" height="8" fill="url(#bw)"/><rect x="5" y="11" width="24" height="7" fill="url(#rb)"/><path d="M7 12L12 20H9V31H5V20H2Z" fill="#2a50a8"/></svg>
<svg class="a" style="left:1578px;top:444px" width="12" height="7" viewBox="0 0 12 7"><path d="M0 0H12L6 7Z" fill="#555"/></svg>
<svg class="a" style="left:1605px;top:431px" width="38" height="33" viewBox="0 0 38 33"><rect x="1" y="1" width="10" height="31" fill="#e8a830" stroke="#b07818" stroke-width="1"/><path d="M3 6H7M3 10H6M3 14H7M3 18H6M3 22H7M3 26H6" stroke="#704808" stroke-width="1"/><path d="M30 10 Q30 2 22 4 Q14 8 24 16 Q32 24 22 28 Q14 30 16 24" fill="none" stroke="#909090" stroke-width="2"/><circle cx="29" cy="10" r="3" fill="#2a40a0"/><circle cx="16" cy="6" r="3" fill="#2a40a0"/><circle cx="17" cy="24" r="3" fill="#2a40a0"/><circle cx="30" cy="28" r="3" fill="#2a40a0"/></svg>
<svg class="a" style="left:1664px;top:432px" width="8" height="30" viewBox="0 0 8 30"><g fill="#b4b4b4"><circle cx="1.5" cy="2" r="1.1"/><circle cx="1.5" cy="7" r="1.1"/><circle cx="1.5" cy="12" r="1.1"/><circle cx="1.5" cy="17" r="1.1"/><circle cx="1.5" cy="22" r="1.1"/><circle cx="1.5" cy="27" r="1.1"/><circle cx="6.5" cy="2" r="1.1"/><circle cx="6.5" cy="7" r="1.1"/><circle cx="6.5" cy="12" r="1.1"/><circle cx="6.5" cy="17" r="1.1"/><circle cx="6.5" cy="22" r="1.1"/><circle cx="6.5" cy="27" r="1.1"/></g></svg>
<svg class="a" style="left:1689px;top:431px" width="34" height="33" viewBox="0 0 34 33"><g stroke="#e0a030" fill="none"><path d="M17 0V33M0 16.5H34" stroke-width="2"/><path d="M17 2L14 10H20Z M17 31L14 23H20Z M2 16.5L10 13.5V19.5Z M32 16.5L24 13.5V19.5Z" fill="#e0a030" stroke-width="1"/><circle cx="17" cy="16.5" r="5" stroke-width="1.5"/></g></svg>
<svg class="a" style="left:1736px;top:444px" width="12" height="7" viewBox="0 0 12 7"><path d="M0 0H12L6 7Z" fill="#555"/></svg>
<svg class="a" style="left:1759px;top:429px" width="44" height="36" viewBox="1759 429 44 36"><path d="M1789.5 431.5V447L1772 461V445Z" fill="#f4e070" opacity=".75" stroke="#e8c840" stroke-width=".8"/><path d="M1761.5 445.5L1785 436L1800 448L1776 458Z" fill="#78b048" opacity=".8"/><path d="M1769 430.5L1792 444.5V463L1769 449Z" fill="#e03a2a" opacity=".7"/></svg>
<svg class="a" style="left:1812px;top:444px" width="12" height="7" viewBox="0 0 12 7"><path d="M0 0H12L6 7Z" fill="#555"/></svg>
<svg class="a" style="left:1842px;top:432px" width="8" height="30" viewBox="0 0 8 30"><g fill="#b4b4b4"><circle cx="1.5" cy="2" r="1.1"/><circle cx="1.5" cy="7" r="1.1"/><circle cx="1.5" cy="12" r="1.1"/><circle cx="1.5" cy="17" r="1.1"/><circle cx="1.5" cy="22" r="1.1"/><circle cx="1.5" cy="27" r="1.1"/><circle cx="6.5" cy="2" r="1.1"/><circle cx="6.5" cy="7" r="1.1"/><circle cx="6.5" cy="12" r="1.1"/><circle cx="6.5" cy="17" r="1.1"/><circle cx="6.5" cy="22" r="1.1"/><circle cx="6.5" cy="27" r="1.1"/></g></svg>
<svg class="a" style="left:1863px;top:427px" width="40" height="40" viewBox="0 0 40 40"><defs><linearGradient id="ext2" x1="0" y1="0" x2="0" y2="1"><stop offset="0" stop-color="#3a80c8"/><stop offset="1" stop-color="#0a4f9e"/></linearGradient></defs><rect x="0" y="0" width="40" height="40" rx="7" fill="url(#ext2)"/><path d="M21 10H32V14H25.5V18.5H31V22H25.5V27H32V31H21Z" fill="#60c8ec"/><path d="M8 11H13V9 Q13 7 15 7 Q17 7 17 9V11H21V17H19 Q17 17 17 19 Q17 21 19 21H21V27H8V21H10 Q12 21 12 19 Q12 17 10 17H8Z" fill="#d8dcdf"/></svg>
<svg class="a" style="left:1918px;top:427px" width="42" height="40" viewBox="0 0 42 40"><path d="M20 1 Q11 1 11 6V11H21V13H6 Q1 13 1 21 Q1 29 6 29H10V23 Q10 19 15 19H25 Q29 19 29 15V6 Q29 1 20 1Z" fill="#3a70a8"/><path d="M22 39 Q31 39 31 34V29H21V27H36 Q41 27 41 19 Q41 11 36 11H32V17 Q32 21 27 21H17 Q13 21 13 25V34 Q13 39 22 39Z" fill="#f0c840"/><circle cx="16" cy="5.5" r="1.8" fill="#fff"/><circle cx="26" cy="34.5" r="1.8" fill="#fff"/></svg>
<!-- ===== LEFT PANEL ===== -->
<!-- toolbar grips -->
<div class="a" style="left:158px;top:424px;width:4px;height:44px;background:repeating-linear-gradient(#b8b8b8 0 2px,transparent 2px 5px)"></div>
<div class="a" style="left:158px;top:490px;width:4px;height:44px;background:repeating-linear-gradient(#b8b8b8 0 2px,transparent 2px 5px)"></div>
<!-- module combobox -->
<div class="a" style="left:360px;top:427px;width:467px;height:41px;border:1px solid #b4b4b4;border-radius:4px;background:linear-gradient(#fafafa,#ededeb)"></div>
<div class="t" style="left:608px;top:438px;font-size:20.8px;color:#2a2a2a">me to Slicer</div>
<svg class="a" style="left:801px;top:443px" width="16" height="9" viewBox="0 0 16 9"><path d="M0 0H16L8 9Z" fill="#505050"/></svg>
<!-- logo remnant -->
<div class="a" style="left:156px;top:560px;width:30px;height:30px;border-radius:50%;background:#8c8e98"></div>
<!-- row1 buttons -->
<div class="a" style="left:157px;top:686px;width:316px;height:49px;border:1px solid #b8b8b8;border-radius:4px;background:linear-gradient(#fbfbfb,#e9e9e7)"></div>
<div class="a" style="left:475px;top:686px;width:316px;height:49px;border:1px solid #b8b8b8;border-radius:4px;background:linear-gradient(#fbfbfb,#e9e9e7)"></div>
<div class="a" style="left:245px;top:712px;width:36px;height:18px;background:#f0e4a0;border:2px solid #3a3a30;border-radius:2px"></div>
<div class="a" style="left:526px;top:712px;width:36px;height:18px;background:#f0e4a0;border:2px solid #3a3a30;border-radius:2px"></div>
<div class="t" style="left:613px;top:700px;font-size:21.1px;font-weight:700;color:#1a1a1a">DICOM Data</div>
<!-- row2 -->
<div class="a" style="left:157px;top:743px;width:316px;height:45px;border:1px solid #b8b8b8;border-radius:4px;background:linear-gradient(#fbfbfb,#e9e9e7)"></div>
<div class="a" style="left:475px;top:743px;width:316px;height:45px;border:1px solid #b8b8b8;border-radius:4px;background:linear-gradient(#fbfbfb,#e9e9e7)"></div>
<svg class="a" style="left:200px;top:748px" width="37" height="37" viewBox="0 0 40 40"><defs><linearGradient id="ext" x1="0" y1="0" x2="0" y2="1"><stop offset="0" stop-color="#3a80c8"/><stop offset="1" stop-color="#0a4f9e"/></linearGradient></defs><rect x="0" y="0" width="40" height="40" rx="7" fill="url(#ext)"/><path d="M21 10H32V14H25.5V18.5H31V22H25.5V27H32V31H21Z" fill="#60c8ec"/><path d="M8 11H13V9 Q13 7 15 7 Q17 7 17 9V11H21V17H19 Q17 17 17 19 Q17 21 19 21H21V27H8V21H10 Q12 21 12 19 Q12 17 10 17H8Z" fill="#d8dcdf"/></svg>
<div class="t" style="left:246px;top:757px;font-size:20.8px;font-weight:700;color:#1a1a1a">Install Extensions</div>
<svg class="a" style="left:495px;top:748px" width="36" height="36" viewBox="0 0 36 36"><defs><radialGradient id="glb" cx=".35" cy=".3" r=".8"><stop offset="0" stop-color="#c0e8ff"/><stop offset=".45" stop-color="#3f7fd8"/><stop offset="1" stop-color="#10308a"/></radialGradient></defs><circle cx="18" cy="18" r="16" fill="url(#glb)"/><path d="M22 8 Q14 14 20 18 Q26 22 16 28" fill="none" stroke="#f0c040" stroke-width="3"/></svg>
<div class="t" style="left:540px;top:757px;font-size:20.9px;font-weight:700;color:#1a1a1a">Download Sample Data</div>
<!-- row3 -->
<div class="a" style="left:157px;top:797px;width:313px;height:45px;border:1px solid #b8b8b8;border-radius:4px;background:linear-gradient(#fbfbfb,#e9e9e7)"></div>
<div class="a" style="left:477px;top:797px;width:314px;height:45px;border:1px solid #b8b8b8;border-radius:4px;background:linear-gradient(#fbfbfb,#e9e9e7)"></div>
<svg class="a" style="left:210px;top:803px" width="32" height="32" viewBox="0 0 32 32"><g fill="#8a8e9a"><circle cx="16" cy="16" r="11"/><rect x="14" y="1" width="4" height="30"/><rect x="1" y="14" width="30" height="4"/><rect x="14" y="1" width="4" height="30" transform="rotate(45 16 16)"/><rect x="14" y="1" width="4" height="30" transform="rotate(-45 16 16)"/></g><circle cx="16" cy="16" r="6" fill="#d8dae4"/><circle cx="16" cy="16" r="3" fill="#3a3e50"/></svg>
<div class="t" style="left:248px;top:810px;font-size:20.3px;font-weight:700;color:#1a1a1a">Customize Slicer</div>
<svg class="a" style="left:515px;top:802px" width="34" height="34" viewBox="0 0 34 34"><path d="M3 3V31M3 9H9M3 19H9M3 29H9" fill="none" stroke="#303030" stroke-width="1.5"/><rect x="1" y="1" width="4" height="4" fill="#fff" stroke="#303030"/><rect x="8" y="7" width="4" height="4" fill="#fff" stroke="#2060d0"/><rect x="8" y="17" width="4" height="4" fill="#fff" stroke="#20a040"/><rect x="8" y="27" width="4" height="4" fill="#fff" stroke="#e08020"/><path d="M14 3H33M14 9H33M14 14H33M14 19H33M14 24H33M14 29H33" stroke="#505050" stroke-width="1.5"/></svg>
<div class="t" style="left:553px;top:808.5px;font-size:20.7px;font-weight:700;color:#1a1a1a">Explore Added Data</div>
<!-- collapsible headers -->
<div class="a" style="left:151px;top:885px;width:646px;height:38px;border:1px solid #b8b8b8;border-radius:4px;background:linear-gradient(#fcfcfc,#e6e6e4)"></div>
<svg class="a" style="left:163px;top:899px" width="13" height="8" viewBox="0 0 13 8"><path d="M0 0H13L6.5 8Z" fill="#505050"/></svg>
<div class="t" style="left:191px;top:894px;font-size:20.1px;color:#2a2a2a">Feedback</div>
<div class="a" style="left:151px;top:926px;width:646px;height:215px;border:1px solid #c4c4c4;border-radius:3px;background:#fff"></div>
<svg class="a" style="left:168px;top:944px" width="105" height="105" viewBox="0 0 105 105"><defs><linearGradient id="fbk" x1="0" y1="0" x2="0" y2="1"><stop offset="0" stop-color="#b0b0d0"/><stop offset="1" stop-color="#a8a8c8"/></linearGradient></defs><rect x="0" y="0" width="105" height="105" rx="14" fill="url(#fbk)"/><path d="M4 6 Q52 -6 100 8 L100 22 Q52 10 4 24Z" fill="#fff" opacity=".35"/><path d="M40 80 Q22 74 20 52 Q20 28 52 24 Q78 24 80 40" fill="none" stroke="#fff" stroke-width="6"/><path d="M40 78 L32 90 L52 82" fill="#fff"/><circle cx="67" cy="58" r="23" fill="#f2f2f6"/><path d="M72 78 L84 88 L78 74Z" fill="#f2f2f6"/></svg>
<div class="t" style="left:291px;top:959px;font-size:21.2px;color:#2a2a2a">Share your stories with us on the <span style="color:#1a3ab0;text-decoration:underline">Slicer forum</span> and</div>
<div class="t" style="left:291px;top:985.5px;font-size:21.1px;color:#2a2a2a">let us know about how 3D Slicer has enabled your</div>
<div class="t" style="left:291px;top:1012px;font-size:21.1px;color:#2a2a2a">research.</div>
<div class="t" style="left:158px;top:1081px;font-size:21.1px;color:#2a2a2a">We are always interested in improving 3D Slicer, to tell us about</div>
<div class="t" style="left:158px;top:1108px;font-size:21.8px;color:#2a2a2a">your problem or submit a bug report, open <b style="color:#111;font-size:20.4px">Help -&gt; Report a Bug</b>.</div>
<div class="a" style="left:151px;top:1144px;width:646px;height:39px;border:1px solid #b8b8b8;border-radius:4px;background:linear-gradient(#fcfcfc,#e6e6e4)"></div>
<svg class="a" style="left:166px;top:1156px" width="8" height="13" viewBox="0 0 8 13"><path d="M0 0V13L8 6.5Z" fill="#505050"/></svg>
<div class="t" style="left:190px;top:1152px;font-size:21.7px;color:#2a2a2a">About</div>
<div class="a" style="left:151px;top:1209px;width:646px;height:39px;border:1px solid #b8b8b8;border-radius:4px;background:linear-gradient(#fcfcfc,#e6e6e4)"></div>
<svg class="a" style="left:166px;top:1221px" width="8" height="13" viewBox="0 0 8 13"><path d="M0 0V13L8 6.5Z" fill="#505050"/></svg>
<div class="t" style="left:190px;top:1217px;font-size:21.6px;color:#2a2a2a">Documentation &amp; Tutorials</div>
<div class="a" style="left:151px;top:1275px;width:646px;height:39px;border:1px solid #b8b8b8;border-radius:4px;background:linear-gradient(#fcfcfc,#e6e6e4)"></div>
<svg class="a" style="left:166px;top:1287px" width="8" height="13" viewBox="0 0 8 13"><path d="M0 0V13L8 6.5Z" fill="#505050"/></svg>
<div class="t" style="left:190px;top:1283px;font-size:21px;color:#2a2a2a">Updates</div>
<div class="a" style="left:151px;top:1340px;width:646px;height:40px;border:1px solid #b8b8b8;border-radius:4px;background:linear-gradient(#fcfcfc,#e6e6e4)"></div>
<svg class="a" style="left:166px;top:1353px" width="8" height="13" viewBox="0 0 8 13"><path d="M0 0V13L8 6.5Z" fill="#505050"/></svg>
<div class="t" style="left:190px;top:1348px;font-size:21.5px;color:#2a2a2a">Acknowledgment</div>
<!-- data probe -->
<div class="a" style="left:151px;top:1694px;width:646px;height:40px;border:1px solid #b8b8b8;border-radius:4px;background:linear-gradient(#fcfcfc,#e6e6e4)"></div>
<svg class="a" style="left:163px;top:1709px" width="13" height="8" viewBox="0 0 13 8"><path d="M0 0H13L6.5 8Z" fill="#505050"/></svg>
<div class="t" style="left:191px;top:1704px;font-size:20.6px;color:#2a2a2a">Data Probe</div>
<div class="a" style="left:166px;top:1764px;width:23px;height:23px;border:1px solid #a8a8a8;border-radius:2px;background:#fff"></div>
<div class="t" style="left:199px;top:1766px;font-size:20.4px;color:#2a2a2a">Show Zoomed Slice</div>
<div class="t" style="left:177px;top:1821px;font-size:20px;color:#2a2a2a">L</div>
<div class="t" style="left:177px;top:1854px;font-size:20px;color:#2a2a2a">F</div>
<div class="t" style="left:177px;top:1887px;font-size:20px;color:#2a2a2a">B</div>
<!-- ===== VIEW BAR CONTENTS ===== -->
<svg width="0" height="0" style="position:absolute">
<defs>
<symbol id="pin" viewBox="0 0 34 20"><path d="M1 10H9" stroke="#000" stroke-opacity=".5" stroke-width="1.2"/><ellipse cx="12" cy="10" rx="3.2" ry="6.5" fill="#2a2a2a"/><ellipse cx="12" cy="9.5" rx="1.6" ry="4" fill="#8a8a8a"/><path d="M14 7H26V13H14Z" fill="#262626"/><ellipse cx="28" cy="10" rx="3" ry="6" fill="#2a2a2a"/><ellipse cx="28.5" cy="9" rx="1.2" ry="3" fill="#707070"/></symbol>
<symbol id="lnk" viewBox="0 0 34 34"><path d="M17 2V5M17 29V32M2 17H5M29 17H32" stroke="#000" stroke-opacity=".75" stroke-width="1.8"/><rect x="6" y="6" width="22" height="22" fill="#000" opacity=".42"/><rect x="6" y="6" width="11" height="11" fill="#fff" opacity=".2"/><rect x="17" y="15" width="11" height="13" fill="#000" opacity=".35"/><rect x="6.50" y="6.50" width="1.6" height="1.6" fill="#fff" opacity=".7"/><rect x="6.50" y="9.25" width="1.6" height="1.6" fill="#fff" opacity=".7"/><rect x="6.50" y="12.00" width="1.6" height="1.6" fill="#fff" opacity=".7"/><rect x="6.50" y="14.75" width="1.6" height="1.6" fill="#fff" opacity=".7"/><rect x="6.50" y="17.50" width="1.6" height="1.6" fill="#fff" opacity=".22"/><rect x="6.50" y="20.25" width="1.6" height="1.6" fill="#fff" opacity=".22"/><rect x="6.50" y="23.00" width="1.6" height="1.6" fill="#fff" opacity=".22"/><rect x="6.50" y="25.75" width="1.6" height="1.6" fill="#fff" opacity=".22"/><rect x="9.25" y="6.50" width="1.6" height="1.6" fill="#fff" opacity=".7"/><rect x="9.25" y="9.25" width="1.6" height="1.6" fill="#fff" opacity=".7"/><rect x="9.25" y="12.00" width="1.6" height="1.6" fill="#fff" opacity=".7"/><rect x="9.25" y="14.75" width="1.6" height="1.6" fill="#fff" opacity=".7"/><rect x="9.25" y="17.50" width="1.6" height="1.6" fill="#fff" opacity=".22"/><rect x="9.25" y="20.25" width="1.6" height="1.6" fill="#fff" opacity=".22"/><rect x="9.25" y="23.00" width="1.6" height="1.6" fill="#fff" opacity=".22"/><rect x="9.25" y="25.75" width="1.6" height="1.6" fill="#fff" opacity=".22"/><rect x="12.00" y="6.50" width="1.6" height="1.6" fill="#fff" opacity=".7"/><rect x="12.00" y="9.25" width="1.6" height="1.6" fill="#fff" opacity=".7"/><rect x="12.00" y="12.00" width="1.6" height="1.6" fill="#fff" opacity=".7"/><rect x="12.00" y="14.75" width="1.6" height="1.6" fill="#fff" opacity=".7"/><rect x="12.00" y="17.50" width="1.6" height="1.6" fill="#fff" opacity=".22"/><rect x="12.00" y="20.25" width="1.6" height="1.6" fill="#fff" opacity=".22"/><rect x="12.00" y="23.00" width="1.6" height="1.6" fill="#fff" opacity=".22"/><rect x="12.00" y="25.75" width="1.6" height="1.6" fill="#fff" opacity=".22"/><rect x="14.75" y="6.50" width="1.6" height="1.6" fill="#fff" opacity=".7"/><rect x="14.75" y="9.25" width="1.6" height="1.6" fill="#fff" opacity=".7"/><rect x="14.75" y="12.00" width="1.6" height="1.6" fill="#fff" opacity=".7"/><rect x="14.75" y="14.75" width="1.6" height="1.6" fill="#fff" opacity=".7"/><rect x="14.75" y="17.50" width="1.6" height="1.6" fill="#fff" opacity=".22"/><rect x="14.75" y="20.25" width="1.6" height="1.6" fill="#fff" opacity=".22"/><rect x="14.75" y="23.00" width="1.6" height="1.6" fill="#fff" opacity=".22"/><rect x="14.75" y="25.75" width="1.6" height="1.6" fill="#fff" opacity=".22"/><rect x="17.50" y="6.50" width="1.6" height="1.6" fill="#fff" opacity=".22"/><rect x="17.50" y="9.25" width="1.6" height="1.6" fill="#fff" opacity=".22"/><rect x="17.50" y="12.00" width="1.6" height="1.6" fill="#fff" opacity=".22"/><rect x="17.50" y="14.75" width="1.6" height="1.6" fill="#000" opacity=".55"/><rect x="17.50" y="17.50" width="1.6" height="1.6" fill="#000" opacity=".55"/><rect x="17.50" y="20.25" width="1.6" height="1.6" fill="#000" opacity=".55"/><rect x="17.50" y="23.00" width="1.6" height="1.6" fill="#000" opacity=".55"/><rect x="17.50" y="25.75" width="1.6" height="1.6" fill="#000" opacity=".55"/><rect x="20.25" y="6.50" width="1.6" height="1.6" fill="#fff" opacity=".22"/><rect x="20.25" y="9.25" width="1.6" height="1.6" fill="#fff" opacity=".22"/><rect x="20.25" y="12.00" width="1.6" height="1.6" fill="#fff" opacity=".22"/><rect x="20.25" y="14.75" width="1.6" height="1.6" fill="#000" opacity=".55"/><rect x="20.25" y="17.50" width="1.6" height="1.6" fill="#000" opacity=".55"/><rect x="20.25" y="20.25" width="1.6" height="1.6" fill="#000" opacity=".55"/><rect x="20.25" y="23.00" width="1.6" height="1.6" fill="#000" opacity=".55"/><rect x="20.25" y="25.75" width="1.6" height="1.6" fill="#000" opacity=".55"/><rect x="23.00" y="6.50" width="1.6" height="1.6" fill="#fff" opacity=".22"/><rect x="23.00" y="9.25" width="1.6" height="1.6" fill="#fff" opacity=".22"/><rect x="23.00" y="12.00" width="1.6" height="1.6" fill="#fff" opacity=".22"/><rect x="23.00" y="14.75" width="1.6" height="1.6" fill="#000" opacity=".55"/><rect x="23.00" y="17.50" width="1.6" height="1.6" fill="#000" opacity=".55"/><rect x="23.00" y="20.25" width="1.6" height="1.6" fill="#000" opacity=".55"/><rect x="23.00" y="23.00" width="1.6" height="1.6" fill="#000" opacity=".55"/><rect x="23.00" y="25.75" width="1.6" height="1.6" fill="#000" opacity=".55"/><rect x="25.75" y="6.50" width="1.6" height="1.6" fill="#fff" opacity=".22"/><rect x="25.75" y="9.25" width="1.6" height="1.6" fill="#fff" opacity=".22"/><rect x="25.75" y="12.00" width="1.6" height="1.6" fill="#fff" opacity=".22"/><rect x="25.75" y="14.75" width="1.6" height="1.6" fill="#000" opacity=".55"/><rect x="25.75" y="17.50" width="1.6" height="1.6" fill="#000" opacity=".55"/><rect x="25.75" y="20.25" width="1.6" height="1.6" fill="#000" opacity=".55"/><rect x="25.75" y="23.00" width="1.6" height="1.6" fill="#000" opacity=".55"/><rect x="25.75" y="25.75" width="1.6" height="1.6" fill="#000" opacity=".55"/><rect x="6" y="6" width="22" height="22" fill="none" stroke="#000" stroke-width="1" opacity=".5"/></symbol>
<symbol id="wnd" viewBox="0 0 28 26"><rect x="1.5" y="1.5" width="24.5" height="23" fill="none" stroke="#1a0604" stroke-width="1.9"/><rect x="1" y="1" width="25.5" height="6" fill="#000"/></symbol>
</defs></svg>
<!-- red -->
<svg class="a" style="left:819px;top:561px" width="34" height="20"><use href="#pin"/></svg>
<div class="t" style="left:871px;top:561.5px;font-size:21px;color:#6a1008;-webkit-text-stroke:.5px #6a1008">R</div>
<svg class="a" style="left:903px;top:554px" width="34" height="34"><use href="#lnk"/></svg>
<svg class="a" style="left:963px;top:559px" width="28" height="26"><use href="#wnd"/></svg>
<div class="a" style="left:1016px;top:567px;width:656px;height:9px;border:1.5px solid #2a2a2a;border-radius:5px;background:linear-gradient(90deg,#3a8dcc 0,#3a8dcc 329px,#e4e4e4 329px)"></div>
<div class="a" style="left:1337px;top:561px;width:16px;height:21px;border:1.5px solid #303030;border-radius:4px;background:linear-gradient(#fff,#e0e0e0)"></div>
<div class="t" style="left:1684px;top:562px;font-size:20.4px;color:#3a0800;-webkit-text-stroke:.3px #3a0800">S: 0.0000mm</div>
<!-- blue -->
<svg class="a" style="left:1842px;top:561px" width="34" height="20"><use href="#pin"/></svg>
<div class="t" style="left:1891px;top:561px;font-size:21px;color:#1a1a30">1</div>
<div class="a" style="left:1924px;top:554px;width:34px;height:34px;background:#8090e0"></div>
<svg class="a" style="left:1924px;top:554px" width="34" height="34" viewBox="0 0 34 34"><path d="M17 0V34M0 17H34" stroke="#111" stroke-width="1.8"/><rect x="8" y="8" width="18" height="18" fill="#8090e0" stroke="#111" stroke-width="1.8"/><rect x="12" y="12" width="10" height="10" fill="none" stroke="#111" stroke-width="1.8"/><path d="M8 8L12 12M26 8L22 12M8 26L12 22M26 26L22 22" stroke="#111" stroke-width="1.5"/></svg>
<svg class="a" style="left:1984px;top:559px" width="28" height="26"><use href="#wnd"/></svg>
<!-- green -->
<svg class="a" style="left:820px;top:1258.5px" width="34" height="20"><use href="#pin"/></svg>
<div class="t" style="left:868px;top:1259.5px;font-size:21px;color:#1a3a0c;-webkit-text-stroke:.4px #1a3a0c">G</div>
<svg class="a" style="left:902px;top:1251.5px" width="34" height="34"><use href="#lnk"/></svg>
<svg class="a" style="left:963px;top:1256.5px" width="28" height="26"><use href="#wnd"/></svg>
<div class="a" style="left:1016px;top:1264.5px;width:656px;height:9px;border:1.5px solid #2a2a2a;border-radius:5px;background:linear-gradient(90deg,#3a8dcc 0,#3a8dcc 328px,#e4e4e4 328px)"></div>
<div class="a" style="left:1336px;top:1258.5px;width:16px;height:21px;border:1.5px solid #303030;border-radius:4px;background:linear-gradient(#fff,#e0e0e0)"></div>
<div class="t" style="left:1680px;top:1259.5px;font-size:20.8px;color:#0e2a06;-webkit-text-stroke:.3px #0e2a06">A: 0.0000mm</div>
<!-- yellow -->
<svg class="a" style="left:1841px;top:1258.5px" width="34" height="20"><use href="#pin"/></svg>
<div class="t" style="left:1889px;top:1259.5px;font-size:21px;color:#3a3000;-webkit-text-stroke:.4px #3a3000">Y</div>
<svg class="a" style="left:1924px;top:1251.5px" width="34" height="34"><use href="#lnk"/></svg>
<svg class="a" style="left:1984px;top:1256.5px" width="28" height="26"><use href="#wnd"/></svg>
<div class="a" style="left:2038px;top:1264.5px;width:656px;height:9px;border:1.5px solid #2a2a2a;border-radius:5px;background:linear-gradient(90deg,#3a8dcc 0,#3a8dcc 329px,#e4e4e4 329px)"></div>
<div class="a" style="left:2359px;top:1258.5px;width:16px;height:21px;border:1.5px solid #303030;border-radius:4px;background:linear-gradient(#fff,#e0e0e0)"></div>
<div class="t" style="left:2705px;top:1259.5px;font-size:20.6px;color:#2a2400;-webkit-text-stroke:.3px #2a2400">L: 0.0000mm</div>
<!-- 3D box -->
<svg class="a" style="left:1829px;top:597px" width="1020" height="644" viewBox="1829 597 1020 644">
<g fill="none" stroke="#b446dc" stroke-width="2.6">
<rect x="2039" y="618.5" width="600" height="600.5"/>
<rect x="2139" y="719.5" width="400" height="399.5"/>
<path d="M2039 618.5L2139 719.5M2639 618.5L2539 719.5M2039 1219L2139 1119M2639 1219L2539 1119" stroke-width="2"/>
</g>
<g fill="#fff" font-family="Liberation Sans">
<text x="2339" y="657" font-size="37" text-anchor="middle">S</text>
<text x="2062" y="933" font-size="37" text-anchor="middle">R</text>
<text x="2339.5" y="931" font-size="31" text-anchor="middle">P</text>
<text x="2614" y="933" font-size="37" text-anchor="middle">L</text>
<text x="2339" y="1209" font-size="37" text-anchor="middle" transform="skewX(-8) translate(170 0)">I</text>
</g>
</svg>
<!-- status bar close button -->
<div class="a" style="left:2760px;top:1944px;width:53px;height:50px;border:1px solid #a8a8a8;border-radius:3px;background:linear-gradient(#fafafa,#e8e8e8)"></div>
<svg class="a" style="left:2765px;top:1948px" width="42" height="42" viewBox="0 0 42 42"><circle cx="21" cy="21" r="19" fill="#9a9a9a"/><path d="M13 13L29 29M29 13L13 29" stroke="#fff" stroke-width="4.5"/></svg>
<div class="a" style="left:2829px;top:1978px;width:18px;height:18px;background:radial-gradient(circle,#a0a0a0 1px,transparent 1.5px) 0 0/6px 6px;clip-path:polygon(100% 0,100% 100%,0 100%)"></div>
<!-- ===== FILE MENU ===== -->
<div class="a" style="left:160px;top:415px;width:448px;height:307px;background:#fff;border:1px solid #9a9a9a"></div>
<svg class="a" style="left:170px;top:420px" width="30" height="34" viewBox="0 0 30 34"><path d="M2 14H22L28 20V32H2Z" fill="#d8d0a0" stroke="#5a5840" stroke-width="1.5"/><text x="3" y="29" font-family="Liberation Sans" font-size="9" font-weight="700" fill="#3a3a30">DATA</text><path d="M9 12V5H5L11 0L17 5H13V12Z" fill="#2a8a40"/></svg>
<div class="t" style="left:207px;top:426px;font-size:20.6px;color:#1a1a1a">Add Data</div>
<div class="a" style="left:207px;top:448px;width:13px;height:2px;background:#1a1a1a"></div>
<div class="t" style="left:520px;top:426px;font-size:20.5px;color:#1a1a1a">Ctrl+O</div>
<svg class="a" style="left:170px;top:462px" width="30" height="34" viewBox="0 0 30 34"><path d="M2 14H28V32H2Z" fill="#d8d0a0" stroke="#5a5840" stroke-width="1.5"/><rect x="4" y="20" width="22" height="7" fill="#c8b870" stroke="#5a5840" stroke-width="1"/><path d="M6 12V6H3L8 1L13 6H10V12Z M17 12V6H14L19 1L24 6H21V12Z" fill="#8a40a0"/></svg>
<div class="t" style="left:207px;top:468px;font-size:20.5px;color:#1a1a1a">Add DICOM Data</div>
<div class="t" style="left:207px;top:510px;font-size:20.1px;color:#b0b0b0">Recent</div>
<svg class="a" style="left:590px;top:513px" width="7" height="12" viewBox="0 0 7 12"><path d="M0 0V12L7 6Z" fill="#c0c0c0"/></svg>
<div class="a" style="left:168px;top:541px;width:432px;height:2px;background:#cfe0ee"></div>
<div class="a" style="left:161px;top:545px;width:446px;height:41px;background:#2f8bc6"></div>
<div class="t" style="left:207px;top:555px;font-size:20.9px;color:#e8f4ff">Download Sample Data</div>
<svg class="a" style="left:170px;top:594px" width="30" height="34" viewBox="0 0 30 34"><path d="M2 14H22L28 20V32H2Z" fill="#d8d0a0" stroke="#5a5840" stroke-width="1.5"/><text x="3" y="29" font-family="Liberation Sans" font-size="9" font-weight="700" fill="#3a3a30">SAVE</text><path d="M9 0V7H5L11 13L17 7H13V0Z" fill="#d05a20"/></svg>
<div class="t" style="left:207px;top:600.5px;font-size:19.9px;color:#1a1a1a">Save Data</div>
<div class="t" style="left:520px;top:600.5px;font-size:19.6px;color:#1a1a1a">Ctrl+S</div>
<div class="a" style="left:168px;top:632px;width:432px;height:2px;background:#d4d4d4"></div>
<svg class="a" style="left:170px;top:642px" width="30" height="32" viewBox="0 0 30 32"><rect x="1" y="1" width="26" height="10" fill="#7a70d8"/><text x="2" y="9" font-family="Liberation Sans" font-size="7" font-weight="700" fill="#fff">MRML</text><path d="M8 11V22L3 30M8 22L13 30" stroke="#a02020" stroke-width="2" fill="none"/><rect x="12" y="14" width="16" height="14" fill="#c02030"/><path d="M16 17L24 25M24 17L16 25" stroke="#fff" stroke-width="2.5"/></svg>
<div class="t" style="left:207px;top:646px;font-size:19.6px;color:#1a1a1a">Close Scene</div>
<div class="t" style="left:520px;top:646px;font-size:20.5px;color:#1a1a1a">Ctrl+W</div>
<div class="a" style="left:168px;top:677px;width:432px;height:2px;background:#d4d4d4"></div>
<div class="t" style="left:207px;top:691px;font-size:20.1px;color:#1a1a1a">Exit</div>
<div class="a" style="left:217px;top:712px;width:11px;height:2px;background:#1a1a1a"></div>
<!-- cursor -->
<svg class="a" style="left:255px;top:553px" width="34" height="48" viewBox="0 0 34 48"><path d="M4.5 3.5V36L12.5 28.5L18.5 43L23.5 41L17.5 27H28.5Z" fill="#3a3a3a" stroke="#fff" stroke-width="2" stroke-linejoin="round"/></svg>
</div></div>
</body></html>
